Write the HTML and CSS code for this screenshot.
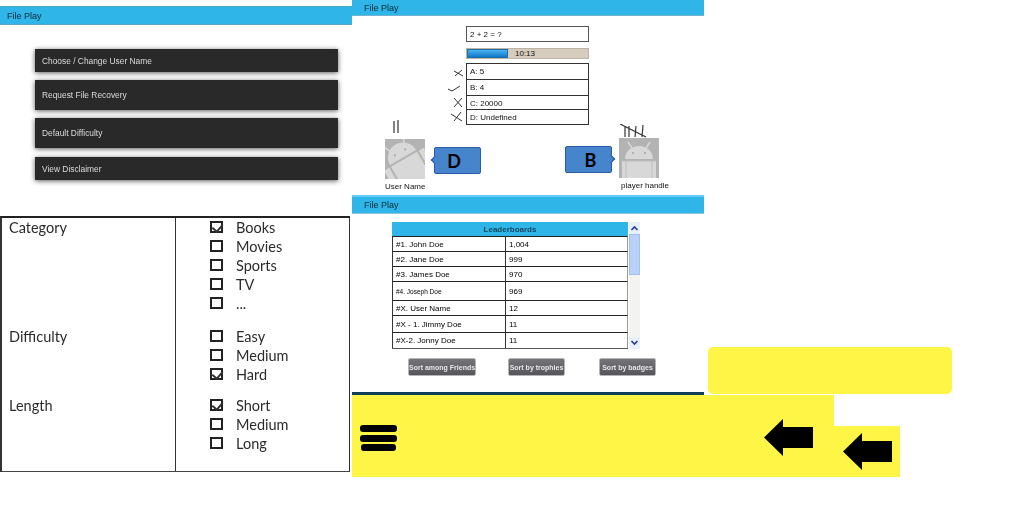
FILE: index.html
```html
<!DOCTYPE html>
<html lang="en">
<head>
<meta charset="utf-8">
<title>File Play mockups</title>
<link rel="stylesheet" href="styles.css">
</head>
<body>
<main class="canvas">

  <section class="sheet sheet-menu">
    <header class="bar bar-menu">File Play</header>
    <nav class="menu">
      <a class="menu-item item-short">Choose / Change User Name</a>
      <a class="menu-item item-tall">Request File Recovery</a>
      <a class="menu-item item-tall">Default Difficulty</a>
      <a class="menu-item item-short item-last">View Disclaimer</a>
    </nav>
  </section>

  <section class="sheet sheet-game">
    <header class="bar bar-game">File Play</header>
    <div class="quiz">
      <div class="question">2 + 2 = ?</div>
      <div class="timer"><div class="timer-fill"></div><span class="timer-text">10:13</span></div>
      <div class="answers">
        <div class="answer-row row-16">
          <svg class="mark" viewBox="0 0 24 16"><path d="M12 8 L21 13 M13 13 L20 7"/></svg>
          <div class="answer">A: 5</div>
        </div>
        <div class="answer-row row-16">
          <svg class="mark" viewBox="0 0 24 16"><path d="M6 10 L10 12 L18 7"/></svg>
          <div class="answer">B: 4</div>
        </div>
        <div class="answer-row row-14">
          <svg class="mark" viewBox="0 0 24 16"><path d="M12 3 L20 12 M12 12 L20 3"/></svg>
          <div class="answer">C: 20000</div>
        </div>
        <div class="answer-row row-16">
          <svg class="mark" viewBox="0 0 24 16"><path d="M9 5 L20 12 M12 12 L19 3"/></svg>
          <div class="answer">D: Undefined</div>
        </div>
      </div>
    </div>
    <div class="players">
      <div class="player">
        <svg class="tally tally-two" viewBox="0 0 40 14"><path d="M9 1 L9 13 M13 0 L13 13"/></svg>
        <svg class="avatar" viewBox="0 0 40 40">
          <rect width="40" height="40" fill="#b3b3b3"/>
          <g transform="rotate(-30 20 22)" fill="#d8d8d8">
            <path d="M5 18 A15 15 0 0 1 35 18 Z"/>
            <rect x="5" y="20" width="30" height="28"/>
            <rect x="-3" y="20" width="6" height="22"/>
            <rect x="37" y="20" width="6" height="22"/>
            <path d="M12 6 L9 0 M28 6 L31 0" stroke="#d8d8d8" stroke-width="1.5"/>
            <circle cx="14" cy="12" r="1" fill="#a5a5a5"/>
            <circle cx="26" cy="12" r="1" fill="#a5a5a5"/>
          </g>
        </svg>
        <span class="player-name">User Name</span>
      </div>
      <div class="bubble bubble-left">D</div>
      <div class="spacer"></div>
      <div class="bubble bubble-right">B</div>
      <div class="player player-right">
        <svg class="tally tally-five" viewBox="0 0 40 14"><path d="M6 2 L6 13 M10 2 L10 13 M17 2 L16 13 M24 1 L23 13 M1 0 L27 13"/></svg>
        <svg class="avatar" viewBox="0 0 40 40">
          <rect width="40" height="40" fill="#b3b3b3"/>
          <g fill="#d8d8d8">
            <path d="M6 21 A14 13 0 0 1 34 21 Z"/>
            <rect x="3" y="23" width="34" height="17"/>
            <path d="M13 10 L9 4 M27 10 L31 4" stroke="#d8d8d8" stroke-width="1.5"/>
            <circle cx="14" cy="15" r="1" fill="#a5a5a5"/>
            <circle cx="26" cy="15" r="1" fill="#a5a5a5"/>
          </g>
          <path d="M3 23 H37 M7 23 V40 M33 23 V40" stroke="#bdbdbd" fill="none"/>
        </svg>
        <span class="player-name player-handle">player handle</span>
      </div>
    </div>
  </section>

  <section class="sheet sheet-board">
    <header class="bar bar-board">File Play</header>
    <div class="board-wrap">
      <div class="board">
        <div class="board-title">Leaderboards</div>
        <div class="board-rows">
          <div class="cell">#1. John Doe</div><div class="cell">1,004</div>
          <div class="cell">#2. Jane Doe</div><div class="cell">999</div>
          <div class="cell">#3. James Doe</div><div class="cell">970</div>
          <div class="cell cell-small">#4. Joseph Doe</div><div class="cell">969</div>
          <div class="cell">#X. User Name</div><div class="cell">12</div>
          <div class="cell">#X - 1. Jimmy Doe</div><div class="cell">11</div>
          <div class="cell">#X-2. Jonny Doe</div><div class="cell">11</div>
        </div>
      </div>
      <div class="scroll">
        <span class="scroll-btn"><svg viewBox="0 0 8 6"><path d="M1 5 L4 2 L7 5"/></svg></span>
        <span class="scroll-thumb"></span>
        <span class="scroll-btn scroll-end"><svg viewBox="0 0 8 6"><path d="M1 1 L4 4 L7 1"/></svg></span>
      </div>
    </div>
    <div class="sorts">
      <button class="sort sort-friends">Sort among Friends</button>
      <button class="sort sort-trophies">Sort by trophies</button>
      <button class="sort sort-badges">Sort by badges</button>
    </div>
  </section>

  <section class="sheet sheet-filter">
    <div class="filter-label">Category</div>
    <ul class="filter-options">
      <li class="opt"><span class="box checked"></span>Books</li>
      <li class="opt"><span class="box"></span>Movies</li>
      <li class="opt"><span class="box"></span>Sports</li>
      <li class="opt"><span class="box"></span>TV</li>
      <li class="opt"><span class="box"></span>...</li>
    </ul>
    <div class="filter-label">Difficulty</div>
    <ul class="filter-options options-mid">
      <li class="opt"><span class="box"></span>Easy</li>
      <li class="opt"><span class="box"></span>Medium</li>
      <li class="opt"><span class="box checked"></span>Hard</li>
    </ul>
    <div class="filter-label">Length</div>
    <ul class="filter-options options-last">
      <li class="opt"><span class="box checked"></span>Short</li>
      <li class="opt"><span class="box"></span>Medium</li>
      <li class="opt"><span class="box"></span>Long</li>
    </ul>
  </section>

  <div class="sheet note-yellow"></div>

  <div class="sheet toolbar">
    <div class="burger"><span></span><span></span><span class="burger-last"></span></div>
    <svg class="arrow" viewBox="0 0 49 37"><path d="M0 18.5 L19 0 V8 H49 V29 H19 V37 Z"/></svg>
  </div>

  <div class="sheet back-chip">
    <svg class="arrow" viewBox="0 0 49 37"><path d="M0 18.5 L19 0 V8 H49 V29 H19 V37 Z"/></svg>
  </div>

</main>
</body>
</html>
```

FILE: styles.css
```css
* { box-sizing: border-box; }
html, body { margin: 0; padding: 0; background: #fff; }
body { font-family: "Liberation Sans", Arial, sans-serif; overflow: hidden; }

.canvas { position: relative; width: 1024px; height: 512px; overflow: hidden; }
.sheet { position: absolute; }

/* the reference is a scaled-down mockup, so its text and lines are soft */
.sheet-menu, .sheet-game, .sheet-board { filter: blur(.4px); }
.sheet-filter { filter: blur(.25px); }

/* header bars */
.bar {
  display: flex;
  align-items: center;
  background: #2fb5e7;
  color: #0c2a38;
  font-size: 9px;
}
.bar-menu { height: 19px; padding-left: 7px; border-top: 1px solid #4aa7cc; border-bottom: 1px solid #5aa6c6; }
.bar-game { height: 16px; padding-left: 12px; border-bottom: 1px solid #6fb4d0; }
.bar-board { height: 19px; padding-left: 12px; border-top: 2px solid #62cdf5; border-bottom: 1px solid #8ec3da; }

/* settings menu */
.sheet-menu { left: 0; top: 6px; width: 352px; }
.menu { display: flex; flex-direction: column; padding: 24px 14px 0 35px; }
.menu-item {
  display: flex;
  align-items: center;
  padding-left: 7px;
  margin-bottom: 8px;
  background: #292929;
  color: #dcdcdc;
  font-size: 8.4px;
  box-shadow: 0 1px 5px rgba(0, 0, 0, .65);
}
.item-short { height: 23px; }
.item-tall { height: 30px; }
.menu-item:nth-child(3) { margin-bottom: 9px; }
.item-last { margin-bottom: 0; }

/* game */
.sheet-game { left: 352px; top: 0; width: 352px; }
.quiz { display: flex; flex-direction: column; padding: 10px 0 0 90px; }
.question, .answer {
  display: flex;
  align-items: center;
  padding-left: 3px;
  font-family: "Liberation Sans", sans-serif;
  font-size: 8px;
  color: #111;
}
.question { width: 123px; height: 16px; margin-left: 24px; border: 1px solid #555; }
.timer {
  position: relative;
  display: flex;
  align-items: center;
  width: 123px;
  height: 11px;
  margin: 6px 0 4px 24px;
  background: #d6ccbd;
  border: 1px solid #bdb4a6;
  font-size: 8px;
  color: #111;
}
.timer-fill {
  width: 41px;
  height: 100%;
  background: linear-gradient(#4fb3f0, #0f78c9);
  border: 1px solid #1d6ea8;
}
.timer-text { margin-left: 7px; }
.answers { display: flex; flex-direction: column; }
.answer-row { display: grid; grid-template-columns: 24px 123px; }
.row-16 { height: 16px; }
.row-14 { height: 14px; }
.answer { border: 1px solid #333; border-bottom-width: 0; }
.answer-row:last-child .answer { border-bottom-width: 1px; }
.mark { width: 24px; height: 16px; fill: none; stroke: #333; stroke-width: 1; }

.players { display: flex; align-items: flex-start; margin-top: -5px; padding: 0 45px 0 33px; }
.player { display: flex; flex-direction: column; width: 40px; }
.player-right { width: 40px; }
.tally { display: block; width: 40px; height: 14px; fill: none; stroke: #333; stroke-width: 1.2; }
.tally-five { margin-top: 4px; }
.tally-two { margin-bottom: 5px; }
.avatar { display: block; width: 40px; height: 40px; flex: none; }
.player-name { margin-top: 3px; font-size: 8px; color: #111; white-space: nowrap; }
.player-handle { margin-left: 2px; }
.bubble {
  position: relative;
  display: flex;
  align-items: center;
  justify-content: center;
  width: 47px;
  height: 27px;
  background: #4684cc;
  border: 1px solid #2a5ba6;
  border-radius: 2px;
  font-family: Lato, "DejaVu Sans", sans-serif;
  font-weight: 700;
  font-size: 18px;
  color: #000;
}
.bubble-left { margin: 27px 0 0 9px; padding-right: 7px; }
.bubble-right { margin: 26px 7px 0 0; padding-left: 4px; }
.bubble::after {
  content: "";
  position: absolute;
  top: 9px;
  width: 5px;
  height: 5px;
  background: #4684cc;
  border-left: 1px solid #2a5ba6;
  border-bottom: 1px solid #2a5ba6;
  transform: rotate(45deg);
}
.bubble-left::after { left: -3px; }
.bubble-right::after { right: -3px; transform: rotate(225deg); }
.spacer { flex: 1; }

/* leaderboard */
.sheet-board { left: 352px; top: 195px; width: 352px; height: 200px; border-bottom: 3px solid #0f3f58; }
.board-wrap { display: flex; gap: 1px; width: 248px; margin: 8px 0 0 40px; }
.board { width: 236px; }
.board-title {
  display: flex;
  align-items: center;
  justify-content: center;
  height: 14px;
  background: #2fb5e7;
  color: #17485f;
  font-family: "Liberation Sans", sans-serif;
  font-weight: 700;
  font-size: 8px;
}
.board-rows {
  display: grid;
  grid-template-columns: 113px 123px;
  grid-template-rows: 15px 15px 15px 19px 15px 17px 16px;
  border-bottom: 1px solid #555;
}
.cell {
  display: flex;
  align-items: center;
  padding-left: 3px;
  border-top: 1px solid #222;
  border-left: 1px solid #333;
  font-family: "Liberation Sans", sans-serif;
  font-size: 8px;
  color: #000;
  white-space: nowrap;
}
.cell:nth-child(even) { border-right: 1px solid #999; }
.cell-small { font-size: 6.5px; }
.scroll { display: flex; flex-direction: column; width: 11px; height: 127px; background: #f3f3f1; }
.scroll-btn { display: block; height: 12px; background: #eaf0fb; }
.scroll-btn svg { display: block; width: 11px; height: 12px; padding: 3px 1px; fill: none; stroke: #23408c; stroke-width: 1.6; }
.scroll-thumb { display: block; height: 41px; background: #b9d0f8; border: 1px solid #a5bfef; }
.scroll-end { margin-top: auto; }

.sorts { display: flex; margin: 9px 0 0 56px; }
.sort {
  height: 18px;
  padding: 0;
  border: 1px solid #b5b5b8;
  border-radius: 2px;
  background: linear-gradient(#747479, #55555a);
  color: #e8e8e8;
  font-family: "Liberation Sans", sans-serif;
  font-weight: 700;
  font-size: 7px;
  white-space: nowrap;
}
.sort-friends { width: 68px; margin-right: 32px; }
.sort-trophies { width: 57px; margin-right: 34px; }
.sort-badges { width: 57px; }

/* filter table */
.sheet-filter {
  left: 0;
  top: 216px;
  width: 350px;
  height: 256px;
  display: grid;
  grid-template-columns: 173px 1fr;
  grid-template-rows: auto auto 1fr;
  border-style: solid;
  border-color: #222 #333 #444 #333;
  border-width: 2px 1px 1px 2px;
  font-family: Lato, "Liberation Sans", sans-serif;
  font-size: 14.5px;
  color: #2b2b2b;
}
.filter-label { padding-left: 7px; line-height: 19px; }
.filter-options {
  margin: 0;
  padding: 0 0 14px 34px;
  list-style: none;
  border-left: 1px solid #333;
}
.options-mid { padding-bottom: 12px; }
.options-last { padding-bottom: 0; }
.opt { display: flex; align-items: center; height: 19px; padding-bottom: 1px; }
.box {
  position: relative;
  width: 13px;
  height: 12px;
  margin-right: 13px;
  border: 2px solid #222;
}
.checked::after {
  content: "";
  position: absolute;
  left: 2px;
  top: -1px;
  width: 5px;
  height: 8px;
  border-right: 2px solid #333;
  border-bottom: 2px solid #333;
  transform: rotate(40deg);
}

/* yellow overlays */
.note-yellow { left: 708px; top: 347px; width: 244px; height: 47px; background: #fff546; border-radius: 5px; }
.toolbar {
  left: 352px;
  top: 395px;
  width: 482px;
  height: 82px;
  display: flex;
  align-items: center;
  justify-content: space-between;
  padding: 3px 21px 0 8px;
  background: #fff546;
}
.burger { display: flex; flex-direction: column; align-items: center; gap: 3px; width: 37px; }
.burger span { display: block; width: 37px; height: 7px; background: #000; border-radius: 3px; }
.burger .burger-last { width: 35px; margin-top: -1px; }
.arrow { display: block; width: 49px; height: 37px; fill: #000; }
.back-chip {
  left: 834px;
  top: 426px;
  width: 66px;
  height: 51px;
  display: flex;
  align-items: center;
  padding-left: 9px;
  background: #fff546;
}
```
